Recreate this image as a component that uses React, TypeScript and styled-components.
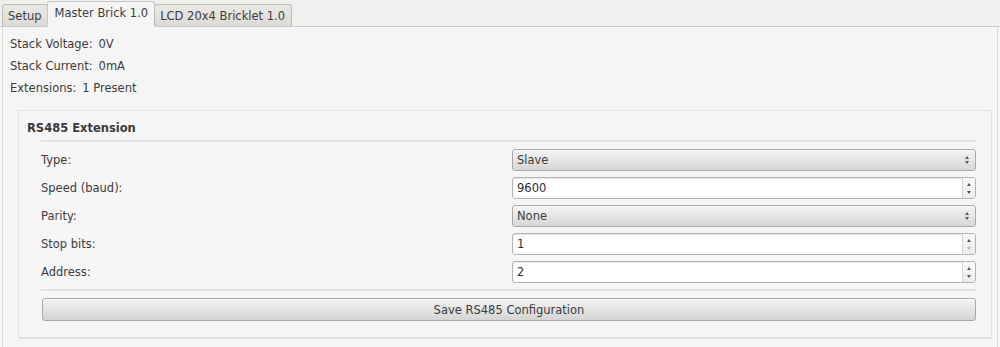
import React from "react";
import styled, { createGlobalStyle } from "styled-components";

const Global = createGlobalStyle`
  html, body { margin: 0; padding: 0; background: #f5f5f5; }
  body {
    font-family: "DejaVu Sans", "Liberation Sans", sans-serif;
    font-size: 11.5px;
    color: #3c3c3c;
    width: 1000px;
    height: 347px;
    overflow: hidden;
  }
`;

const Window = styled.div`
  display: flex;
  flex-direction: column;
  width: 1000px;
  height: 347px;
`;

const TabBar = styled.div`
  display: flex;
  align-items: flex-end;
  height: 27px;
  padding-left: 2px;
  background: #f1f0ee;
  border-bottom: 1px solid #cfcdca;
  box-sizing: border-box;
`;

const Tab = styled.div<{ $active?: boolean }>`
  box-sizing: border-box;
  height: ${(p) => (p.$active ? "26px" : "22px")};
  margin-bottom: ${(p) => (p.$active ? "-1px" : "0")};
  padding: ${(p) => (p.$active ? "0 6px 2px 6px" : "0 6px 0 5px")};
  display: flex;
  align-items: center;
  font-size: 11.5px;
  color: #3c3c3c;
  border: 1px solid ${(p) => (p.$active ? "#c9c7c4" : "#bdbab6")};
  border-bottom: ${(p) => (p.$active ? "1px solid #f5f5f5" : "none")};
  border-radius: 3px 3px 0 0;
  background: ${(p) =>
    p.$active ? "#f5f5f5" : "linear-gradient(#ebe9e6, #dddad6)"};
  white-space: nowrap;
  & + & { margin-left: -1px; }
`;

const Pane = styled.div`
  flex: 1;
  display: flex;
  flex-direction: column;
  padding: 6px 7px 0 7px;
  margin: 0 2px;
  border-left: 1px solid #dcdcdc;
  border-right: 1px solid #dcdcdc;
`;

const InfoLine = styled.div`
  height: 22px;
  display: flex;
  align-items: center;
  gap: 6px;
`;

const GroupBox = styled.div`
  margin: 11px 0 0 8px;
  width: 974px;
  box-sizing: border-box;
  height: 229px;
  border: 1px solid #e3e3e3;
  border-bottom: 2px solid #e0e0e0;
  background: #f6f6f6;
  padding: 8px 15px 0 8px;
  display: flex;
  flex-direction: column;
`;

const GroupTitle = styled.div`
  font-weight: bold;
  height: 18px;
  display: flex;
  align-items: center;
  color: #3a3a3a;
`;

const Inner = styled.div`
  margin-left: 14px;
  display: flex;
  flex-direction: column;
`;

const Separator = styled.div<{ $mt: number; $mb: number }>`
  height: 2px;
  background: #e2e2e2;
  border-bottom: 1px solid #f9f9f9;
  margin-top: ${(p) => p.$mt}px;
  margin-bottom: ${(p) => p.$mb}px;
`;

const Form = styled.div`
  display: grid;
  grid-template-columns: 471px 1fr;
  row-gap: 6px;
`;

const Label = styled.div`
  height: 22px;
  display: flex;
  align-items: center;
`;

const Combo = styled.div`
  height: 22px;
  box-sizing: border-box;
  border: 1px solid #a9a9a9;
  border-radius: 3px;
  background: linear-gradient(#f4f4f4, #e6e6e6 50%, #d6d6d6);
  display: flex;
  align-items: center;
  padding: 0 6px 0 4px;
  justify-content: space-between;
  box-shadow: inset 0 1px 0 #fbfbfb;
`;

const Spin = styled.div`
  height: 22px;
  box-sizing: border-box;
  border: 1px solid #b3b3b3;
  border-radius: 3px;
  background: #ffffff;
  display: flex;
  align-items: stretch;
  box-shadow: inset 0 1px 1px #e6e6e6;
`;

const SpinText = styled.div`
  flex: 1;
  display: flex;
  align-items: center;
  padding-left: 4px;
  color: #2e2e2e;
`;

const SpinButtons = styled.div`
  width: 12px;
  border-left: 1px solid #d6d6d6;
  background: linear-gradient(#fafafa, #ececec);
  border-radius: 0 2px 2px 0;
  display: flex;
  flex-direction: column;
  align-items: center;
  justify-content: center;
  gap: 5px;
`;

const Arrow = styled.div<{ $down?: boolean; $dim?: boolean }>`
  width: 0;
  height: 0;
  border-left: 2.5px solid transparent;
  border-right: 2.5px solid transparent;
  ${(p) =>
    p.$down
      ? `border-top: 3px solid ${p.$dim ? "#b5b5b5" : "#555"};`
      : `border-bottom: 3px solid ${p.$dim ? "#b5b5b5" : "#555"};`}
`;

const ComboArrows = styled.div`
  display: flex;
  flex-direction: column;
  align-items: center;
  gap: 2px;
`;

const Button = styled.div`
  margin-left: 1px;
  height: 23px;
  box-sizing: border-box;
  border: 1px solid #a8a8a8;
  border-radius: 3px;
  background: linear-gradient(#f3f3f3, #e4e4e4 50%, #d4d4d4);
  display: flex;
  align-items: center;
  justify-content: center;
  box-shadow: inset 0 1px 0 #fcfcfc;
`;

const ComboBox = ({ value }: { value: string }) => (
  <Combo>
    <span>{value}</span>
    <ComboArrows>
      <Arrow />
      <Arrow $down />
    </ComboArrows>
  </Combo>
);

const SpinBox = ({ value, dimDown }: { value: string; dimDown?: boolean }) => (
  <Spin>
    <SpinText>{value}</SpinText>
    <SpinButtons>
      <Arrow />
      <Arrow $down $dim={dimDown} />
    </SpinButtons>
  </Spin>
);

export default function App() {
  return (
    <Window>
      <Global />
      <TabBar>
        <Tab>Setup</Tab>
        <Tab $active>Master Brick 1.0</Tab>
        <Tab>LCD 20x4 Bricklet 1.0</Tab>
      </TabBar>
      <Pane>
        <InfoLine>
          <span>Stack Voltage:</span>
          <span>0V</span>
        </InfoLine>
        <InfoLine>
          <span>Stack Current:</span>
          <span>0mA</span>
        </InfoLine>
        <InfoLine>
          <span>Extensions:</span>
          <span>1 Present</span>
        </InfoLine>
        <GroupBox>
          <GroupTitle>RS485 Extension</GroupTitle>
          <Inner>
            <Separator $mt={3} $mb={6} />
            <Form>
              <Label>Type:</Label>
              <ComboBox value="Slave" />
              <Label>Speed (baud):</Label>
              <SpinBox value="9600" />
              <Label>Parity:</Label>
              <ComboBox value="None" />
              <Label>Stop bits:</Label>
              <SpinBox value="1" dimDown />
              <Label>Address:</Label>
              <SpinBox value="2" />
            </Form>
            <Separator $mt={6} $mb={6} />
            <Button>Save RS485 Configuration</Button>
          </Inner>
        </GroupBox>
      </Pane>
    </Window>
  );
}
